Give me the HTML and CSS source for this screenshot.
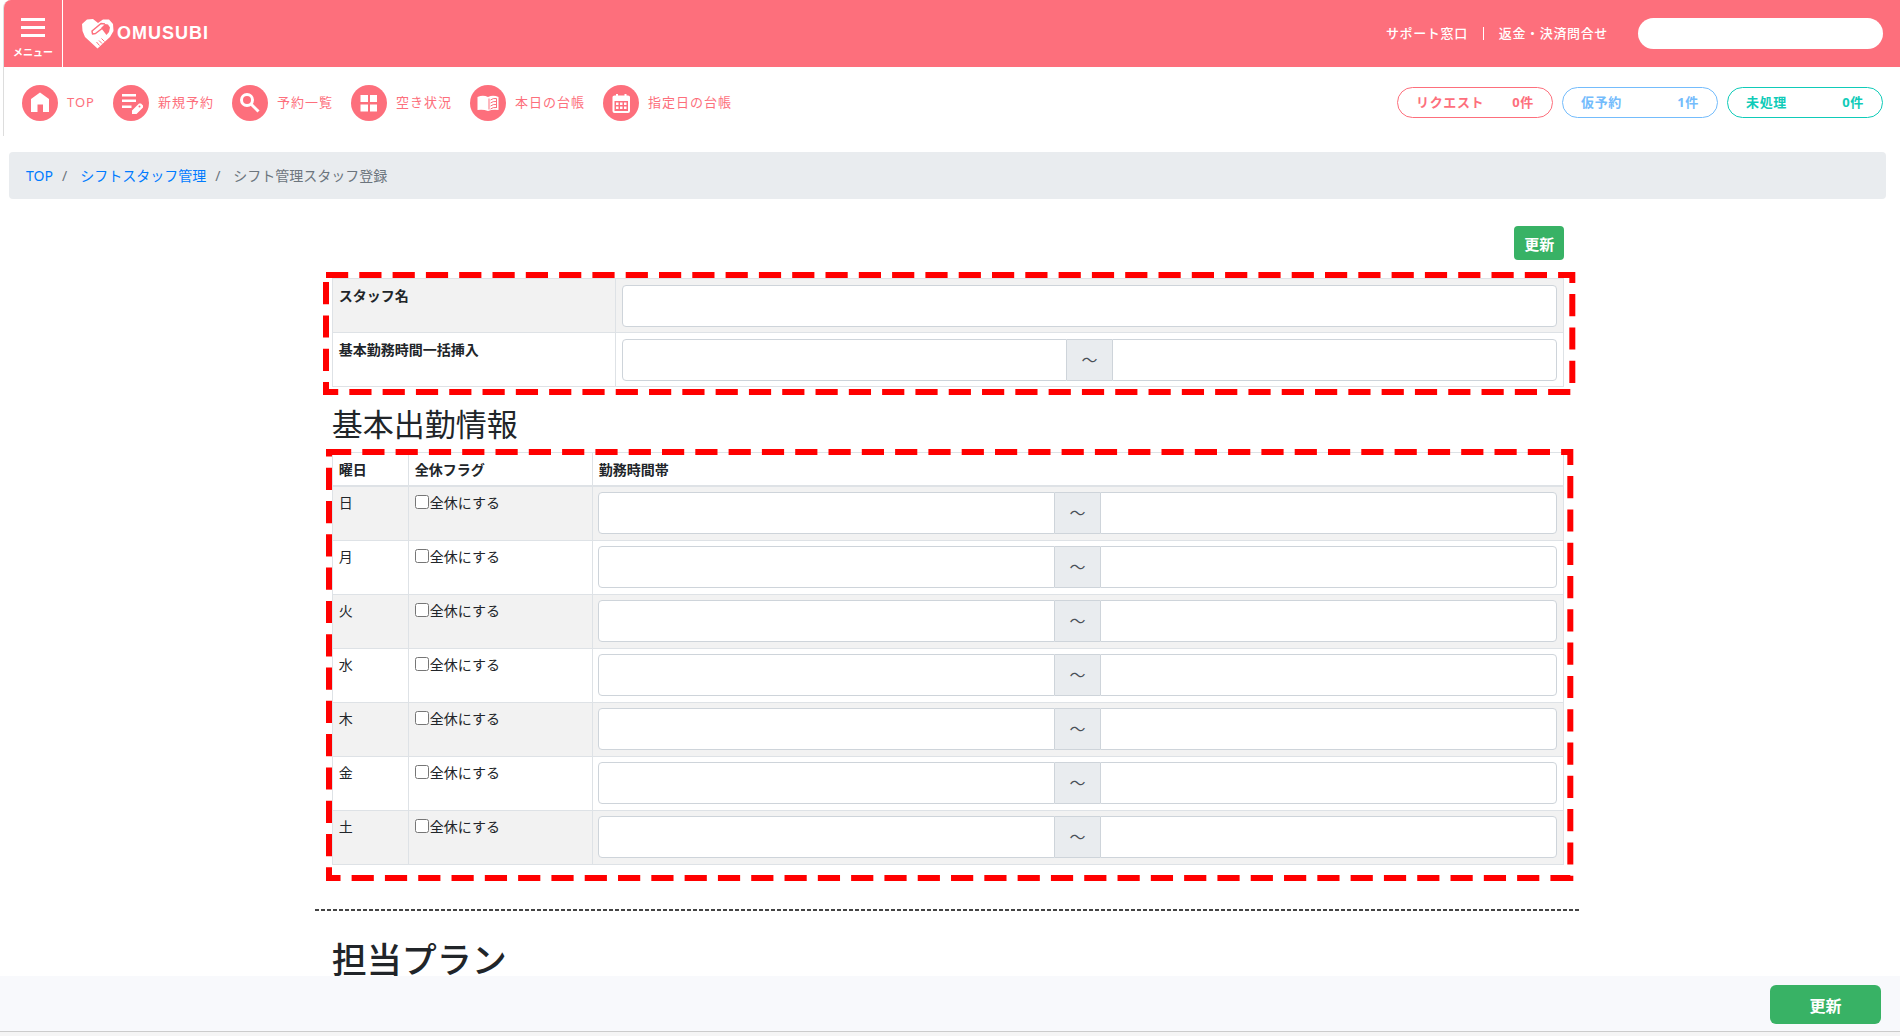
FILE: index.html
```html
<!DOCTYPE html>
<html lang="ja">
<head>
    <meta charset="UTF-8">
    <meta name="viewport" content="width=device-width, initial-scale=1.0">
    <title>シフト管理スタッフ登録 | OMUSUBI</title>
    <link rel="stylesheet" href="styles.css">
</head>
<body>

    <div class="top-area">
        <header class="header">
            <button type="button" class="menu-btn">
                <span class="menu-lines"><i></i><i></i><i></i></span>
                メニュー
            </button>
            <a href="#" class="logo">
                <svg width="32" height="30" viewBox="0 0 32 30">
                    <path fill="#fff" d="M5 0.5 L11 0 L16 4 L21 0.5 L27 0.5 L31 5 L31.500 12 L28 18 L15.500 29.500 L3 18 L0.500 12 L0 5 Z"/>
                    <path fill="#fd6f7c" d="M19 9 L23 5 L26 5.500 L28 8.500 L27 13 L24.500 16 Z"/>
                    <path fill="none" stroke="#fd6f7c" stroke-width="1.500" stroke-linejoin="round" d="M20 9.500 L13.500 14.500 L10.500 15 L10 12 L19 4.500 L23 5"/>
                    <path fill="none" stroke="#fd6f7c" stroke-width="1" d="M19.500 19.500 L22.500 22.500 M17 21.500 L20 24.500 M14.500 23 L17.500 26.500"/>
                </svg>
                <span>OMUSUBI</span>
            </a>
            <div class="header-right">
                <a href="#" class="header-link">サポート窓口</a>
                <span class="header-sep"></span>
                <a href="#" class="header-link">返金・決済問合せ</a>
                <input type="text" class="search" aria-label="検索">
            </div>
        </header>

        <nav class="nav">
            <a href="#" class="nav-item">
                <svg width="36" height="36" viewBox="0 0 36 36">
                    <circle cx="18" cy="18" r="18"/>
                    <path class="w" d="M18 7.500 L27 14 V27 H21 V19.500 H15.500 V27 H9 V14 Z"/>
                </svg>
                <span>TOP</span>
            </a>
            <a href="#" class="nav-item">
                <svg width="36" height="36" viewBox="0 0 36 36">
                    <circle cx="18" cy="18" r="18"/>
                    <path class="w" d="M9 9 H23 V11.500 H9 Z M9 14.500 H23 V17 H9 Z M9 20.500 H18.500 V23 H9 Z M19 25.500 L26 18.500 L28 18.500 L30 20.500 V22.500 L23.500 29 H19 Z"/>
                    <circle cx="26.500" cy="21.500" r="1"/>
                </svg>
                <span>新規予約</span>
            </a>
            <a href="#" class="nav-item">
                <svg width="36" height="36" viewBox="0 0 36 36">
                    <circle cx="18" cy="18" r="18"/>
                    <circle class="line" cx="15" cy="15" r="5.500"/>
                    <path class="line" d="M19 19 L26.500 26.500"/>
                </svg>
                <span>予約一覧</span>
            </a>
            <a href="#" class="nav-item">
                <svg width="36" height="36" viewBox="0 0 36 36">
                    <circle cx="18" cy="18" r="18"/>
                    <path class="w" d="M9.500 10 H17 V17 H9.500 Z M19 10 H26 V17 H19 Z M9.500 19.500 H17 V26.500 H9.500 Z M19 19.500 H26 V26.500 H19 Z"/>
                </svg>
                <span>空き状況</span>
            </a>
            <a href="#" class="nav-item">
                <svg width="36" height="36" viewBox="0 0 36 36">
                    <circle cx="18" cy="18" r="18"/>
                    <path class="w" d="M7.500 12 Q13 9.500 18 12 Q23 9.500 28.500 12 V25 Q23 24 18 26 Q13 24 7.500 25 Z"/>
                    <path class="cut" d="M19 13.500 V24.500 M20.500 15 Q23 13 26.500 13.500 V23 M20.500 18 Q23 16 26.500 16.500 M20.500 21 Q23 19 26.500 19.500 M20.500 24 Q23 22 26.500 22.500"/>
                </svg>
                <span>本日の台帳</span>
            </a>
            <a href="#" class="nav-item">
                <svg width="36" height="36" viewBox="0 0 36 36">
                    <circle cx="18" cy="18" r="18"/>
                    <path class="w" d="M13 9 H15 V10.500 H21.500 V9 H23.500 V10.500 H25 Q27 10.500 27 12 V26 Q27 28 25 28 H11.500 Q9.500 28 9.500 26 V12 Q9.500 10.500 11.500 10.500 H13 Z"/>
                    <path d="M11.500 16 H25 V26 H11.500 Z"/>
                    <path class="w" d="M13 17.500 H15.500 V20 H13 Z M17 17.500 H19.500 V20 H17 Z M21 17.500 H23.500 V20 H21 Z M13 21.500 H15.500 V24 H13 Z M17 21.500 H19.500 V24 H17 Z M21 21.500 H23.500 V24 H21 Z"/>
                </svg>
                <span>指定日の台帳</span>
            </a>
            <div class="status">
                <a href="#" class="badge request"><span>リクエスト</span><span>0件</span></a>
                <a href="#" class="badge temp"><span>仮予約</span><span>1件</span></a>
                <a href="#" class="badge pending"><span>未処理</span><span>0件</span></a>
            </div>
        </nav>
    </div>

    <main class="main">
        <ol class="breadcrumb">
            <li><a href="#">TOP</a></li>
            <li><a href="#">シフトスタッフ管理</a></li>
            <li>シフト管理スタッフ登録</li>
        </ol>

        <form id="staff-form" class="container">
            <div class="btn-row">
                <button type="button" class="btn">更新</button>
            </div>

            <div class="table-box">
                <table class="table staff-table">
                    <tr>
                        <th><label for="staff-name">スタッフ名</label></th>
                        <td><input type="text" id="staff-name" class="form-control"></td>
                    </tr>
                    <tr>
                        <th><label for="all-start">基本勤務時間一括挿入</label></th>
                        <td>
                            <div class="input-group">
                                <input type="text" id="all-start" class="form-control">
                                <span class="tilde">～</span>
                                <input type="text" class="form-control" aria-label="終了時間">
                            </div>
                        </td>
                    </tr>
                </table>
                <svg class="mark mark-staff"><rect width="100%" height="100%"/></svg>
            </div>

            <h2>基本出勤情報</h2>

            <div class="table-box">
                <table class="table week-table">
                    <thead>
                        <tr><th class="col-day">曜日</th><th class="col-flag">全休フラグ</th><th>勤務時間帯</th></tr>
                    </thead>
                    <tbody>
                        <tr>
                            <td>日</td>
                            <td><label class="check"><input type="checkbox">全休にする</label></td>
                            <td><div class="input-group"><input type="text" class="form-control" aria-label="日 開始"><span class="tilde">～</span><input type="text" class="form-control" aria-label="日 終了"></div></td>
                        </tr>
                        <tr>
                            <td>月</td>
                            <td><label class="check"><input type="checkbox">全休にする</label></td>
                            <td><div class="input-group"><input type="text" class="form-control" aria-label="月 開始"><span class="tilde">～</span><input type="text" class="form-control" aria-label="月 終了"></div></td>
                        </tr>
                        <tr>
                            <td>火</td>
                            <td><label class="check"><input type="checkbox">全休にする</label></td>
                            <td><div class="input-group"><input type="text" class="form-control" aria-label="火 開始"><span class="tilde">～</span><input type="text" class="form-control" aria-label="火 終了"></div></td>
                        </tr>
                        <tr>
                            <td>水</td>
                            <td><label class="check"><input type="checkbox">全休にする</label></td>
                            <td><div class="input-group"><input type="text" class="form-control" aria-label="水 開始"><span class="tilde">～</span><input type="text" class="form-control" aria-label="水 終了"></div></td>
                        </tr>
                        <tr>
                            <td>木</td>
                            <td><label class="check"><input type="checkbox">全休にする</label></td>
                            <td><div class="input-group"><input type="text" class="form-control" aria-label="木 開始"><span class="tilde">～</span><input type="text" class="form-control" aria-label="木 終了"></div></td>
                        </tr>
                        <tr>
                            <td>金</td>
                            <td><label class="check"><input type="checkbox">全休にする</label></td>
                            <td><div class="input-group"><input type="text" class="form-control" aria-label="金 開始"><span class="tilde">～</span><input type="text" class="form-control" aria-label="金 終了"></div></td>
                        </tr>
                        <tr>
                            <td>土</td>
                            <td><label class="check"><input type="checkbox">全休にする</label></td>
                            <td><div class="input-group"><input type="text" class="form-control" aria-label="土 開始"><span class="tilde">～</span><input type="text" class="form-control" aria-label="土 終了"></div></td>
                        </tr>
                    </tbody>
                </table>
                <svg class="mark mark-week"><rect width="100%" height="100%"/></svg>
            </div>

            <hr class="divider">

            <h1>担当プラン</h1>
        </form>
    </main>

    <footer class="footer">
        <button type="submit" form="staff-form" class="btn btn-wide">更新</button>
    </footer>

</body>
</html>
```
FILE: styles.css
```css
* {
    margin: 0;
    padding: 0;
    box-sizing: border-box;
}

body {
    font-family: 'Noto Sans', 'Noto Sans CJK JP', sans-serif;
    font-size: 14px;
    line-height: 21px;
    color: #212529;
    background-color: #fff;
    min-height: 100vh;
    overflow: hidden;
}

a {
    text-decoration: none;
}

/* header */
.top-area {
    margin-left: 3px;
    border-left: 1px solid #ddd;
    border-top-left-radius: 8px;
    overflow: hidden;
}

.header {
    display: flex;
    align-items: center;
    height: 67px;
    padding-right: 17px;
    background-color: #fd6f7c;
}

.menu-btn {
    display: flex;
    flex-direction: column;
    align-items: center;
    gap: 8px;
    width: 59px;
    height: 67px;
    padding-top: 18px;
    border: none;
    border-right: 1px solid #fff;
    background: none;
    color: #fff;
    font-family: inherit;
    font-size: 10px;
    font-weight: bold;
    line-height: 14px;
}

.menu-lines {
    display: flex;
    flex-direction: column;
    gap: 5px;
}

.menu-lines i {
    width: 24px;
    height: 3px;
    background-color: #fff;
}

.logo {
    display: flex;
    align-items: center;
    gap: 3px;
    margin-left: 19px;
    color: #fff;
    font-family: 'Liberation Sans', sans-serif;
    font-size: 18px;
    font-weight: bold;
    letter-spacing: 1px;
}

.header-right {
    display: flex;
    align-items: center;
    margin-left: auto;
}

.header-link {
    color: #fff;
    font-size: 13px;
    font-weight: 500;
    letter-spacing: 0.05em;
}

.header-sep {
    width: 1px;
    height: 13px;
    margin: 0 15px;
    background-color: #fff;
}

.search {
    width: 245px;
    height: 31px;
    margin-left: 30px;
    padding: 0 16px;
    border: none;
    border-radius: 16px;
    background-color: #fff;
}

/* navigation */
.nav {
    display: flex;
    align-items: center;
    gap: 18px;
    height: 69px;
    padding: 2px 17px 0 18px;
}

.nav-item {
    display: flex;
    align-items: center;
    gap: 9px;
    color: #fd6f7c;
    font-size: 13px;
    letter-spacing: 1px;
}

.nav-item svg {
    fill: #fd6f7c;
}

.nav-item .w {
    fill: #fff;
}

.nav-item .line {
    fill: none;
    stroke: #fff;
    stroke-width: 3;
}

.nav-item .cut {
    fill: none;
    stroke: #fd6f7c;
    stroke-width: 1;
}

.status {
    display: flex;
    gap: 9px;
    margin-left: auto;
}

.badge {
    display: flex;
    justify-content: space-between;
    align-items: center;
    width: 156px;
    height: 31px;
    padding: 0 18px;
    border: 1px solid;
    border-radius: 16px;
    font-size: 13px;
    font-weight: bold;
    letter-spacing: 0.05em;
}

.request {
    color: #fd6f7c;
}

.temp {
    color: #74bcfc;
}

.pending {
    color: #0fcbb8;
}

/* breadcrumb */
.breadcrumb {
    display: flex;
    margin: 16px 10px 0 9px;
    padding: 13px 17px;
    border-radius: 4px;
    background-color: #e9ecef;
    color: #6c757d;
    list-style: none;
}

.breadcrumb li + li::before {
    content: "/";
    padding: 0 13px 0 9px;
}

.breadcrumb a {
    color: #007bff;
}

/* form */
.main {
    padding-right: 4px;
}

.container {
    width: 67%;
    margin: 0 auto;
    padding: 27px 19px 0;
}

.btn-row {
    display: flex;
    justify-content: flex-end;
    margin-bottom: 18px;
}

.btn {
    height: 34px;
    padding: 0 10px;
    border: none;
    border-radius: 4px;
    background-color: #38b265;
    color: #fff;
    font-family: inherit;
    font-size: 15px;
    font-weight: bold;
}

.table-box {
    position: relative;
}

.table {
    width: 100%;
    border-collapse: collapse;
    table-layout: fixed;
}

.table th,
.table td {
    padding: 6px 6px 5px;
    border: 1px solid #dee2e6;
    text-align: left;
    vertical-align: top;
}

.staff-table th {
    width: 23%;
}

.staff-table tr:first-child,
.week-table tbody tr:nth-child(odd) {
    background-color: #f2f2f2;
}

.week-table thead th {
    border-bottom-width: 2px;
}

.week-table td {
    padding: 5px 6px 6px;
}

.week-table td:last-child {
    padding-left: 5px;
}

.col-day {
    width: 76px;
}

.col-flag {
    width: 184px;
}

.form-control {
    display: block;
    width: 100%;
    height: 42px;
    padding: 6px 12px;
    border: 1px solid #ced4da;
    border-radius: 4px;
    background-color: #fff;
    font-family: inherit;
    font-size: 16px;
}

.input-group {
    display: flex;
}

.input-group .form-control {
    flex: 1;
    min-width: 0;
}

.input-group .form-control:first-child {
    border-radius: 4px 0 0 4px;
}

.input-group .form-control:last-child {
    border-radius: 0 4px 4px 0;
}

.tilde {
    display: flex;
    align-items: center;
    justify-content: center;
    width: 45px;
    border: 1px solid #ced4da;
    border-width: 1px 0;
    background-color: #e9ecef;
    color: #495057;
    font-size: 16px;
}

.check {
    display: flex;
}

.check input {
    width: 14px;
    height: 14px;
    margin: 3px 1px 0 0;
}

/* dashed highlight round each table */
.mark {
    position: absolute;
    overflow: visible;
    pointer-events: none;
}

.mark rect {
    fill: none;
    stroke: #f00;
    stroke-width: 6;
    stroke-dasharray: 22.2 11.1;
}

.mark-staff {
    top: -3px;
    left: -6px;
    width: calc(100% + 14px);
    height: calc(100% + 8px);
}

.mark-week {
    top: 0;
    left: -3px;
    width: calc(100% + 9px);
    height: calc(100% + 13px);
}

h1,
h2 {
    font-weight: 500;
}

h2 {
    margin: 18px 0 9px;
    font-size: 31px;
    font-weight: 400;
    line-height: 38px;
}

.divider {
    height: 2px;
    margin: 44px -17px 27px;
    border: none;
    background: repeating-linear-gradient(90deg, #444 0, #444 4px, #fff 4px, #fff 6px);
}

h1 {
    font-size: 35px;
    line-height: 44px;
}

/* fixed bar at the bottom */
.footer {
    position: fixed;
    left: 0;
    right: 0;
    bottom: 0;
    display: flex;
    justify-content: flex-end;
    height: 60px;
    padding: 9px 19px 0 0;
    background: linear-gradient(#f8f9fc 55px, #ccc 55px, #ccc 56px, #f5f5f5 56px);
}

.btn-wide {
    width: 111px;
    height: 39px;
    border-radius: 6px;
    font-size: 16px;
}
```
